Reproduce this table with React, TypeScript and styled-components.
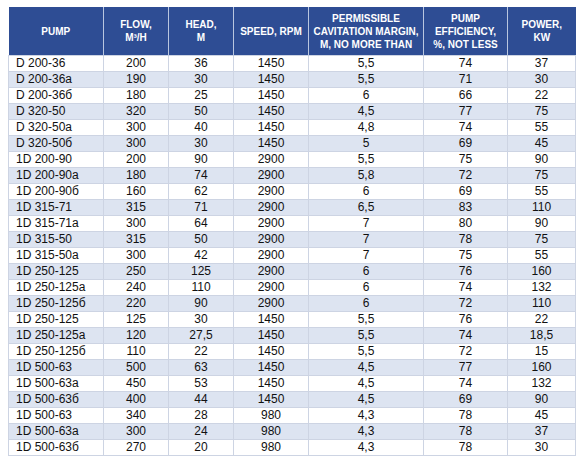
import styled, { createGlobalStyle } from "styled-components";

const GlobalStyle = createGlobalStyle`
  html, body {
    margin: 0;
    background: #ffffff;
  }
`;

const Page = styled.div`
  padding: 7px 0 0 8px;
  font-family: "Liberation Sans", Arial, sans-serif;
`;

const Table = styled.table`
  width: 567px;
  table-layout: fixed;
  border-collapse: collapse;
  font-size: 12px;
  color: #111;
`;

const HeadCell = styled.th`
  height: 48px;
  padding: 0 1px;
  background: #2e4d94;
  color: #ffffff;
  font-weight: bold;
  font-size: 10px;
  line-height: 13px;
  text-align: center;
  white-space: nowrap;
  border-left: 1px solid #b9c6df;
  &:first-child {
    border-left: none;
  }
`;

const Row = styled.tr<{ $striped: boolean }>`
  height: 16px;
  background: ${(p) => (p.$striped ? "#dde4f1" : "#ffffff")};
`;

const Cell = styled.td<{ $left?: boolean }>`
  padding: 0 0 0 ${(p) => (p.$left ? "7px" : "0")};
  text-align: ${(p) => (p.$left ? "left" : "center")};
  line-height: 15px;
  border: 1px solid #cdd4e3;
  white-space: nowrap;
`;

const widths = [95, 65, 65, 75, 115, 84, 68];

const headers: string[][] = [
  ["PUMP"],
  ["FLOW,", "M³/H"],
  ["HEAD,", "M"],
  ["SPEED, RPM"],
  ["PERMISSIBLE", "CAVITATION MARGIN,", "M, NO MORE THAN"],
  ["PUMP", "EFFICIENCY,", "%, NOT LESS"],
  ["POWER,", "KW"],
];

const rows: string[][] = [
  ["D 200-36", "200", "36", "1450", "5,5", "74", "37"],
  ["D 200-36а", "190", "30", "1450", "5,5", "71", "30"],
  ["D 200-36б", "180", "25", "1450", "6", "66", "22"],
  ["D 320-50", "320", "50", "1450", "4,5", "77", "75"],
  ["D 320-50а", "300", "40", "1450", "4,8", "74", "55"],
  ["D 320-50б", "300", "30", "1450", "5", "69", "45"],
  ["1D 200-90", "200", "90", "2900", "5,5", "75", "90"],
  ["1D 200-90а", "180", "74", "2900", "5,8", "72", "75"],
  ["1D 200-90б", "160", "62", "2900", "6", "69", "55"],
  ["1D 315-71", "315", "71", "2900", "6,5", "83", "110"],
  ["1D 315-71а", "300", "64", "2900", "7", "80", "90"],
  ["1D 315-50", "315", "50", "2900", "7", "78", "75"],
  ["1D 315-50а", "300", "42", "2900", "7", "75", "55"],
  ["1D 250-125", "250", "125", "2900", "6", "76", "160"],
  ["1D 250-125а", "240", "110", "2900", "6", "74", "132"],
  ["1D 250-125б", "220", "90", "2900", "6", "72", "110"],
  ["1D 250-125", "125", "30", "1450", "5,5", "76", "22"],
  ["1D 250-125а", "120", "27,5", "1450", "5,5", "74", "18,5"],
  ["1D 250-125б", "110", "22", "1450", "5,5", "72", "15"],
  ["1D 500-63", "500", "63", "1450", "4,5", "77", "160"],
  ["1D 500-63а", "450", "53", "1450", "4,5", "74", "132"],
  ["1D 500-63б", "400", "44", "1450", "4,5", "69", "90"],
  ["1D 500-63", "340", "28", "980", "4,3", "78", "45"],
  ["1D 500-63а", "300", "24", "980", "4,3", "78", "37"],
  ["1D 500-63б", "270", "20", "980", "4,3", "78", "30"],
];

export default function App() {
  return (
    <Page>
      <GlobalStyle />
      <Table>
        <colgroup>
          {widths.map((w, i) => (
            <col key={i} style={{ width: w }} />
          ))}
        </colgroup>
        <thead>
          <tr>
            {headers.map((lines, i) => (
              <HeadCell key={i}>
                {lines.map((l, j) => (
                  <div key={j}>{l}</div>
                ))}
              </HeadCell>
            ))}
          </tr>
        </thead>
        <tbody>
          {rows.map((r, i) => (
            <Row key={i} $striped={i % 2 === 1}>
              {r.map((v, j) => (
                <Cell key={j} $left={j === 0}>
                  {v}
                </Cell>
              ))}
            </Row>
          ))}
        </tbody>
      </Table>
    </Page>
  );
}
